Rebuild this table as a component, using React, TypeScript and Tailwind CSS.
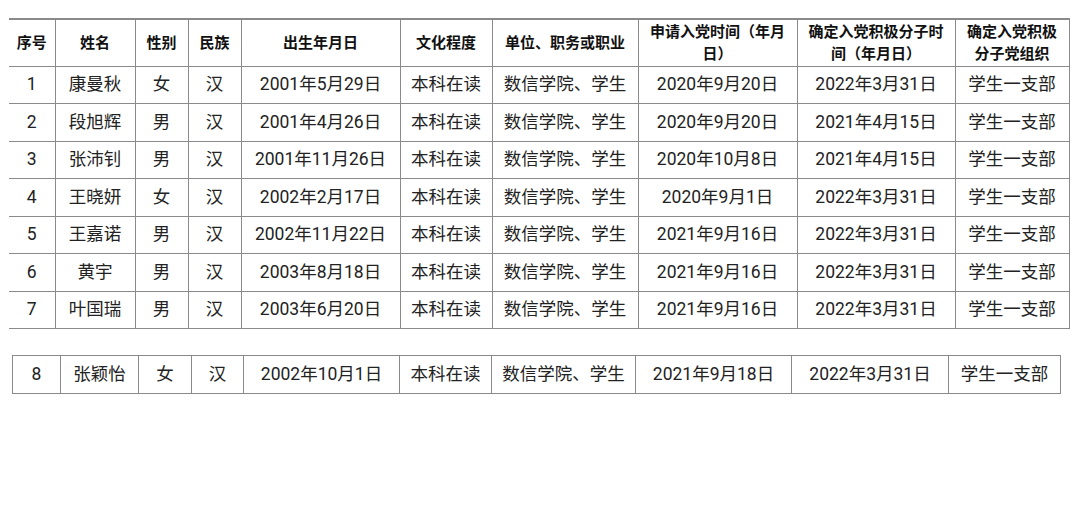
import React from "react";

const font = { fontFamily: '"Roboto", "Noto Sans CJK SC", sans-serif' };

const rows = [
  ["1", "康曼秋", "女", "汉", "2001年5月29日", "本科在读", "数信学院、学生", "2020年9月20日", "2022年3月31日", "学生一支部"],
  ["2", "段旭辉", "男", "汉", "2001年4月26日", "本科在读", "数信学院、学生", "2020年9月20日", "2021年4月15日", "学生一支部"],
  ["3", "张沛钊", "男", "汉", "2001年11月26日", "本科在读", "数信学院、学生", "2020年10月8日", "2021年4月15日", "学生一支部"],
  ["4", "王晓妍", "女", "汉", "2002年2月17日", "本科在读", "数信学院、学生", "2020年9月1日", "2022年3月31日", "学生一支部"],
  ["5", "王嘉诺", "男", "汉", "2002年11月22日", "本科在读", "数信学院、学生", "2021年9月16日", "2022年3月31日", "学生一支部"],
  ["6", "黄宇", "男", "汉", "2003年8月18日", "本科在读", "数信学院、学生", "2021年9月16日", "2022年3月31日", "学生一支部"],
  ["7", "叶国瑞", "男", "汉", "2003年6月20日", "本科在读", "数信学院、学生", "2021年9月16日", "2022年3月31日", "学生一支部"],
];

const row8 = ["8", "张颖怡", "女", "汉", "2002年10月1日", "本科在读", "数信学院、学生", "2021年9月18日", "2022年3月31日", "学生一支部"];

const headers = [
  "序号",
  "姓名",
  "性别",
  "民族",
  "出生年月日",
  "文化程度",
  "单位、职务或职业",
  "申请入党时间（年月日）",
  "确定入党积极分子时间（年月日）",
  "确定入党积极分子党组织",
];

const w1 = [46, 80, 53, 53, 159, 92, 146, 159, 158, 114];
const w2 = [48, 78, 53, 52, 156, 92, 144, 156, 157, 112];

export default function App() {
  return (
    <div className="w-[1080px] h-[525px] bg-white text-[#222]" style={font}>
      <div className="pt-[18px] pl-[9px]">
        <table className="table-fixed border-collapse w-[1060px]">
          <colgroup>
            {w1.map((w, i) => (
              <col key={i} style={{ width: w }} />
            ))}
          </colgroup>
          <thead>
            <tr className="h-[47px]">
              {headers.map((h, i) => (
                <th
                  key={i}
                  className={
                    "border-[1.5px] border-[#8a8a8a] border-t-[2px] text-[15px] font-bold leading-[22px] text-[#111] px-[6px] text-center align-middle " +
                    (i === 0 ? "border-l-0" : "")
                  }
                >
                  {h}
                </th>
              ))}
            </tr>
          </thead>
          <tbody>
            {rows.map((r, ri) => (
              <tr key={ri} className="h-[37.5px]">
                {r.map((c, ci) => (
                  <td
                    key={ci}
                    className={
                      "border-[1.5px] border-[#8a8a8a] text-[17.5px] leading-none text-center align-middle whitespace-nowrap " +
                      (ci === 0 ? "border-l-0" : "")
                    }
                  >
                    {c}
                  </td>
                ))}
              </tr>
            ))}
          </tbody>
        </table>
      </div>
      <div className="pt-[26px] pl-[12px]">
        <table className="table-fixed border-collapse w-[1048px]">
          <colgroup>
            {w2.map((w, i) => (
              <col key={i} style={{ width: w }} />
            ))}
          </colgroup>
          <tbody>
            <tr className="h-[38px]">
              {row8.map((c, ci) => (
                <td
                  key={ci}
                  className="border-[1.5px] border-[#8a8a8a] text-[17.5px] leading-none text-center align-middle whitespace-nowrap"
                >
                  {c}
                </td>
              ))}
            </tr>
          </tbody>
        </table>
      </div>
    </div>
  );
}
